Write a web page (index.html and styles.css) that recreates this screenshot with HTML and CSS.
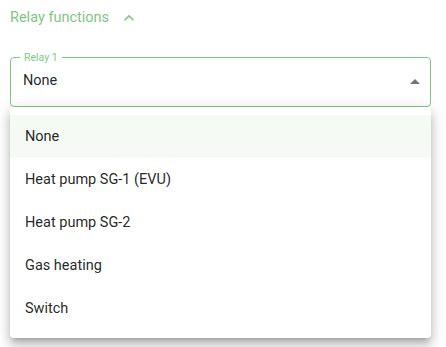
FILE: index.html
```html
<!DOCTYPE html>
<html>
<head>
<meta charset="utf-8">
<link rel="stylesheet" href="styles.css">
</head>
<body>
<div class="page">
  <div class="section-head">
    <span class="section-title">Relay functions</span>
    <svg class="chev" viewBox="0 0 24 24" width="20" height="20"><path d="M12 8l-6 6 1.41 1.41L12 10.83l4.59 4.58L18 14z" fill="currentColor"/></svg>
  </div>
  <div class="field">
    <fieldset class="outline"><legend>Relay 1</legend></fieldset>
    <span class="value">None</span>
    <svg class="arrow" viewBox="0 0 24 24" width="24" height="24"><path d="M7 14l5-5 5 5z" fill="currentColor"/></svg>
  </div>
  <div class="field next">
    <fieldset class="outline grey"><legend></legend></fieldset>
  </div>
  <ul class="menu">
    <li class="item selected">None</li>
    <li class="item">Heat pump SG-1 (EVU)</li>
    <li class="item">Heat pump SG-2</li>
    <li class="item">Gas heating</li>
    <li class="item">Switch</li>
  </ul>
</div>
</body>
</html>
```
FILE: styles.css
```css
html, body { margin: 0; padding: 0; background: #fff; }
body { font-family: Roboto, "Noto Sans", Arial, sans-serif; width: 446px; height: 347px; overflow: hidden; }
.page { position: relative; padding: 0 15px 0 10px; }
.section-head { display: flex; align-items: center; height: 34px; color: #7fc683; }
.section-title { font-size: 14.5px; letter-spacing: 0; }
.chev { margin-left: 10px; margin-top: 1px; }
.field { position: relative; margin-top: 23px; height: 50px; }
.outline { position: absolute; inset: -5px 0 0 0; margin: 0; padding: 0 8px; border: 1px solid #81c784; border-radius: 4px; pointer-events: none; }
.outline legend { font-size: 10.5px; color: #81c784; padding: 0 4px; line-height: 11px; margin-left: 1px; }
.outline.grey { border-color: #bdbdbd; }
.value { position: absolute; left: 13px; top: 15px; font-size: 14.5px; color: rgba(0,0,0,0.87); }
.arrow { position: absolute; right: 4px; top: 13px; color: #757575; }
.field.next { margin-top: 30px; }
.menu { position: absolute; left: 10px; top: 107px; width: 421px; margin: 0; padding: 8px 0; list-style: none; background: #fff; border-radius: 4px;
  box-shadow: 0 5px 5px -3px rgba(0,0,0,0.2), 0 8px 10px 1px rgba(0,0,0,0.14), 0 3px 14px 2px rgba(0,0,0,0.12); }
.item { height: 43px; display: flex; align-items: center; padding-left: 15px; font-size: 14.5px; color: rgba(0,0,0,0.87); }
.item.selected { background: #f5faf5; }
```
